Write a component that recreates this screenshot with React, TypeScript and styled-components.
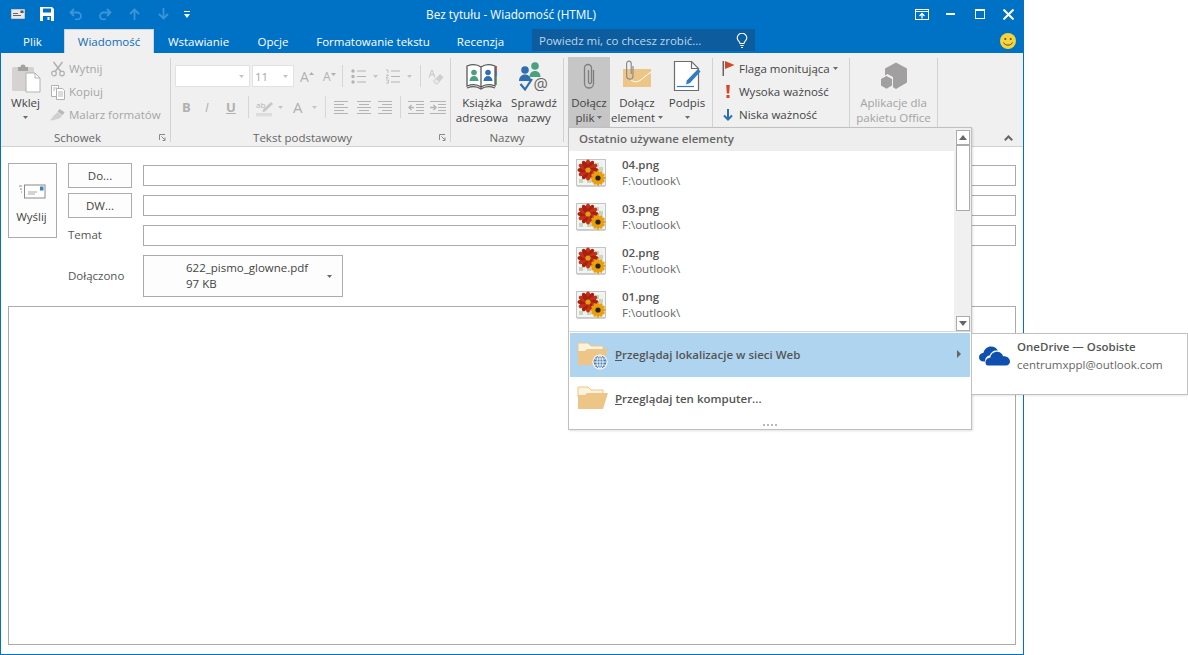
import { FC, ReactNode } from "react";
import styled, { createGlobalStyle } from "styled-components";

const GlobalStyle = createGlobalStyle`
  html, body {
    margin: 0;
    padding: 0;
    background: #fff;
  }
  body {
    font-family: "Open Sans", "Noto Sans", "Liberation Sans", sans-serif;
    font-size: 11.5px;
    color: #444;
  }
`;

const Caret: FC<{ color?: string; up?: boolean }> = ({ color = "#6a6a6a", up }) => (
  <svg width="5" height="3" viewBox="0 0 5 3">
    <path d={up ? "M0 3h5L2.500 0z" : "M0 0h5L2.500 3z"} fill={color} />
  </svg>
);

const PETALS = [0, 30, 60, 90, 120, 150, 180, 210, 240, 270, 300, 330];

const FlowerThumb = () => (
  <svg width="30" height="28" viewBox="0 0 30 28">
    <rect x="0.5" y="0.5" width="29" height="26" fill="#f4f4f4" stroke="#c4c4c4" />
    <path d="M1 26.500h28V28H1z" fill="#d0d0d0" />
    <rect x="3" y="3" width="24" height="21" fill="#eef2ea" />
    <path d="M19 4h4v4h-4zM23 8h4v4h-4zM19 12h4v4h-4zM3 20h4v4H3zM11 20h4v4h-4z" fill="#c8d6c0" />
    {PETALS.map((deg) => (
      <ellipse key={deg} cx="12" cy="5.500" rx="2.300" ry="5" fill={deg % 60 ? "#a8200e" : "#c4301a"} transform={`rotate(${deg} 12 11)`} />
    ))}
    <circle cx="12" cy="11" r="2.600" fill="#d9a21a" />
    {PETALS.map((deg) => (
      <ellipse key={deg} cx="22" cy="14.500" rx="1.700" ry="3.200" fill="#e8a010" transform={`rotate(${deg} 22 19)`} />
    ))}
    <circle cx="22" cy="19" r="2.600" fill="#2c2418" />
  </svg>
);

const FolderIcon: FC<{ globe?: boolean }> = ({ globe }) => (
  <svg width="32" height="32" viewBox="0 0 32 32">
    <path d="M1 5h10l3 3h12v7H1z" fill="#fdf2dc" stroke="#edc687" />
    <path d="M1 27V13h7l2-2h21l-5 16z" fill="#edc687" />
    {globe && (
      <g>
        <circle cx="23" cy="24" r="7.600" fill="#fff" />
        <circle cx="23" cy="24" r="6.500" fill="#4f7fb8" />
        <path d="M16.500 24h13M17.500 21h11M17.500 27h11M23 17.500v13" stroke="#fff" strokeWidth="0.9" />
        <ellipse cx="23" cy="24" rx="3" ry="6.500" fill="none" stroke="#fff" strokeWidth="0.9" />
      </g>
    )}
  </svg>
);

const PasteIcon = () => (
  <svg width="30" height="31" viewBox="0 0 30 31">
    <rect x="1" y="5" width="22" height="24" rx="1.500" fill="#d6d2d2" />
    <path d="M7 5h2.500a2.500 2.500 0 0 1 5 0H17v4H7z" fill="#a3a0a0" />
    <path d="M15 11h9l5 5v14H15z" fill="#fff" stroke="#b4b2b2" />
    <path d="M24 11v5h5" fill="none" stroke="#b4b2b2" />
  </svg>
);

const ScissorsIcon = () => (
  <svg width="16" height="16" viewBox="0 0 16 16" fill="none" stroke="#b0b0b0" strokeWidth="1.200">
    <circle cx="4" cy="12.500" r="2.300" />
    <circle cx="12" cy="12.500" r="2.300" />
    <path d="M5.200 10.500 12.500 1M10.800 10.500 3.500 1" strokeWidth="1.500" />
  </svg>
);

const CopyIcon = () => (
  <svg width="16" height="16" viewBox="0 0 16 16" fill="#fff" stroke="#b0b0b0">
    <path d="M1.500 1.500h7v11h-7z" />
    <path d="M6.500 4.500h6l2 2v9h-8z" />
    <path d="M3 4h4M3 6h2M8 8h5M8 10h5M8 12h5" strokeWidth="0.9" />
  </svg>
);

const PainterIcon = () => (
  <svg width="17" height="16" viewBox="0 0 17 16">
    <path d="M10 1.500 15.500 5l-2 3L8 4.500z" fill="#b8b8b8" />
    <path d="M8 5l5 3.200-2.400 3.300L1 14l-.5-1.500 3.500-2-2.500.3z" fill="#cfcfcf" />
  </svg>
);

const Launcher = () => (
  <svg width="7" height="7" viewBox="0 0 7 7" fill="none" stroke="#8a8a8a">
    <path d="M.5 6V.5H6" />
    <path d="M2.500 2.500 6 6M6 3.500V6.500H3.500" />
  </svg>
);

const ListIcon: FC<{ numbered?: boolean }> = ({ numbered }) => (
  <svg width="15" height="15" viewBox="0 0 15 15" fill="none" stroke="#b4b4b4">
    {numbered ? (
      <path d="M1 1h2v3M1 6h2.500L1 9h2.500M1 11h2.500v3H1" strokeWidth="0.8" />
    ) : (
      <g fill="#b4b4b4" stroke="none">
        <circle cx="2" cy="2" r="1.700" />
        <circle cx="2" cy="7.500" r="1.700" />
        <circle cx="2" cy="13" r="1.700" />
      </g>
    )}
    <path d="M6 2h9M6 7.500h9M6 13h9" />
  </svg>
);

const ClearIcon = () => (
  <svg width="16" height="17" viewBox="0 0 16 17">
    <path d="M4 1 7.500 9.500h-1L5.600 7.200H2.400L1.500 9.500h-1zM4 3 2.800 6.200h2.400z" fill="#c2c2c2" />
    <path d="M5.500 13 12 6l3.500 3.200L9.500 16H7.500z" fill="#cfcfcf" />
    <path d="M5.500 13 8 10.400l3.500 3.200L9.500 16H7.500z" fill="#e8e8e8" stroke="#c2c2c2" strokeWidth="0.6" />
  </svg>
);

const HighlightIcon = () => (
  <svg width="17" height="20" viewBox="0 -4 17 20">
    <text x="0" y="7" fontFamily="Open Sans, sans-serif" fontSize="8" fill="#b4b4b4">ab</text>
    <path d="M15 1 17 3 9 10.500 6.500 11l.5-2.600z" fill="#c8c8c8" />
    <rect x="0" y="12" width="16" height="3.500" fill="#dddddd" />
  </svg>
);

const AlignIcon: FC<{ mode: "left" | "center" | "right" }> = ({ mode }) => {
  const short = { left: "M0 3.500h10M0 9.500h10", center: "M2 3.500h10M2 9.500h10", right: "M4 3.500h10M4 9.500h10" }[mode];
  return (
    <svg width="14" height="13" viewBox="0 0 14 13" fill="none" stroke="#b4b4b4">
      <path d="M0 .5h14M0 6.500h14M0 12.500h14" />
      <path d={short} />
    </svg>
  );
};

const IndentIcon: FC<{ increase?: boolean }> = ({ increase }) => (
  <svg width="16" height="13" viewBox="0 0 16 13" fill="none" stroke="#b4b4b4">
    <path d="M0 .5h16M8 3.500h8M8 6.500h8M8 9.500h8M0 12.500h16" />
    {increase ? (
      <path d="M0 6.500h5M3.500 4 6 6.500 3.500 9" strokeWidth="1.400" />
    ) : (
      <path d="M6 6.500H1M3.500 4 1 6.500 3.500 9" strokeWidth="1.400" />
    )}
  </svg>
);

const AddressBookIcon = () => (
  <svg width="32" height="28" viewBox="0 0 32 28">
    <path d="M28 3h3v19h-3z" fill="#6fa66f" />
    <path d="M28 3h3v5h-3z" fill="#d2603a" />
    <path d="M28 8h3v5h-3z" fill="#3f7fc0" />
    <path d="M1 3c5-2 10-2 14 1v20C11 21 6 21 1 23zM15 4c4-3 9-3 14-1v20c-5-2-10-2-14 1z" fill="#fff" stroke="#5a5a5a" strokeWidth="1.300" />
    <circle cx="8" cy="9.500" r="2.800" fill="#4aa07f" />
    <path d="M3.500 18c0-3 2-5 4.500-5s4.500 2 4.500 5z" fill="#4aa07f" />
    <circle cx="22" cy="9.500" r="2.800" fill="#2f6fb0" />
    <path d="M17.500 18c0-3 2-5 4.500-5s4.500 2 4.500 5z" fill="#2f6fb0" />
    <path d="M1 25c5-2 10-2 14 1 4-3 9-3 14-1" fill="none" stroke="#5a5a5a" strokeWidth="1.300" />
  </svg>
);

const CheckNamesIcon = () => (
  <svg width="32" height="36" viewBox="0 0 32 36">
    <circle cx="17" cy="4" r="3.800" fill="#4aa07f" />
    <path d="M11.500 15c0-4 2.500-6 5.500-6s5.500 2 5.500 6z" fill="#4aa07f" />
    <circle cx="7" cy="8" r="3.800" fill="#2f6fb0" />
    <path d="M1 19c0-4 2.500-6.500 6-6.500s6 2.500 6 6.500z" fill="#2f6fb0" />
    <path d="M2.500 22 7 27.500 14 17" fill="none" stroke="#2f6fb0" strokeWidth="2.200" />
    <text x="15.500" y="28" fontFamily="Open Sans, sans-serif" fontSize="16" fill="#666">@</text>
  </svg>
);

const PaperclipIcon = () => (
  <svg width="14" height="28" viewBox="0 0 14 28" fill="none" stroke="#7e7e7e" strokeWidth="1.300">
    <path d="M11.500 8v13.500a4.500 4.500 0 0 1-9 0V6a3.500 3.500 0 0 1 7 0v14a1.500 1.500 0 0 1-3 0V8" />
  </svg>
);

const AttachItemIcon = () => (
  <svg width="30" height="27" viewBox="0 0 30 27">
    <path d="M1 9h28v18H1z" fill="#edc687" />
    <path d="M9 20c4 3 8 2 12-2l8-6" fill="none" stroke="#fff" strokeWidth="1" />
    <path d="M11 6v10a3.200 3.200 0 0 1-6.400 0V3.500a2.300 2.300 0 0 1 4.600 0V14" fill="none" stroke="#8c8c8c" strokeWidth="1.200" />
  </svg>
);

const SignatureIcon = () => (
  <svg width="28" height="32" viewBox="0 0 28 32">
    <path d="M1.500 1.500h17l7 7v22h-24z" fill="#fff" stroke="#6d6d6d" strokeWidth="1.200" />
    <path d="M18.500 1.500v7h7" fill="none" stroke="#6d6d6d" strokeWidth="1.200" />
    <path d="M25 9l2.500 2.500-10.500 11.500-4 1.500 1-4.200z" fill="#2f7cc4" />
    <path d="M4 26.500h17" stroke="#2f7cc4" strokeWidth="1.200" />
  </svg>
);

const FlagIcon = () => (
  <svg width="13" height="15" viewBox="0 0 13 15">
    <path d="M.5 0h1.500v15H.5z" fill="#666" />
    <path d="M3 0l9.500 4L3 8z" fill="#d24726" />
  </svg>
);

const HighImportanceIcon = () => (
  <svg width="6" height="13" viewBox="0 0 6 13">
    <path d="M1.200 0h3.600l-.6 8.500H1.800z" fill="#d24726" />
    <rect x="1.500" y="10" width="3" height="3" fill="#d24726" />
  </svg>
);

const LowImportanceIcon = () => (
  <svg width="10" height="12" viewBox="0 0 10 12" fill="none" stroke="#2f6fb0" strokeWidth="2">
    <path d="M5 0v10M1 6.500 5 10.500 9 6.500" />
  </svg>
);

const AppsIcon = () => (
  <svg width="28" height="28" viewBox="0 0 28 28">
    <path d="M16 .5 27 6.500v14l-11 6.500-3-1.800V15L7.500 12 5 13.500V6.500z" fill="#a29fa0" />
    <path d="M6.500 14 12 17v6.500l-5.500 3.200L1 23.500V17z" fill="#a29fa0" />
  </svg>
);

const SendIcon = () => (
  <svg width="28" height="15" viewBox="0 0 28 15" fill="none">
    <rect x="6.500" y="1" width="20.500" height="13" fill="#fff" stroke="#8a8a8a" />
    <rect x="22" y="2.500" width="3.500" height="4" fill="#3f7fc0" />
    <path d="M10 8h9M10 10h7" stroke="#a8a8a8" />
    <path d="M1 2h3M2 5h2M3 8h1" stroke="#8a8a8a" />
  </svg>
);

const OneDriveIcon = () => (
  <svg width="33" height="22" viewBox="0 0 33 22">
    <path d="M7 17.500c-4 .5-6-1.500-6-4.200 0-2.600 2-4.200 4.300-4.200C6.300 5 9.500 2.500 13 2.500c3 0 5.500 1.500 6.800 4-3.800-.6-7.200 1.500-8 5-2.800 0-4.600 2.500-4.800 6z" fill="#0f4fb0" />
    <path d="M10 21.500c-1.500 0-2.500-1.300-2.500-3 0-2.600 1.800-4.800 4.800-4.800.4-3.800 3.400-6 6.700-6 3 0 5.300 1.800 6.200 4.500 3.800-.2 6.800 2 6.800 5.300 0 2.300-1.500 4-4 4z" fill="#0f4fb0" />
  </svg>
);

const Smiley = () => (
  <svg width="16" height="16" viewBox="0 0 16 16">
    <circle cx="8" cy="8" r="8" fill="#f6d33c" />
    <circle cx="5.300" cy="6" r="1" fill="#5a4a10" />
    <circle cx="10.700" cy="6" r="1" fill="#5a4a10" />
    <path d="M3.500 9.500c1.500 3.500 7.500 3.500 9 0" fill="none" stroke="#5a4a10" strokeWidth="1" />
  </svg>
);

const BulbIcon = () => (
  <svg width="12" height="15" viewBox="0 0 12 15" fill="none" stroke="#fff" strokeWidth="1.100">
    <path d="M4 10.500C4 8.500 1.200 7.800 1.200 5a4.800 4.800 0 0 1 9.600 0c0 2.800-2.800 3.500-2.800 5.500z" />
    <path d="M4.300 12.500h3.400M5 14.500h2" />
  </svg>
);

const MailGlyph = () => (
  <svg width="14" height="10" viewBox="0 0 14 10">
    <rect width="14" height="10" fill="#e9e9e9" stroke="#777" strokeWidth="0.6" />
    <rect x="9.500" y="1.500" width="3" height="2.500" fill="#555" />
    <path d="M2 4.500h5M2 6.500h8" stroke="#666" />
  </svg>
);

const SaveGlyph = () => (
  <svg width="14" height="14" viewBox="0 0 14 14">
    <path d="M0 0h12l2 2v12H0z" fill="#fff" />
    <path d="M3 1.500h8v4H3zM3 9h8v5H3z" fill="#0072c6" />
    <rect x="7.500" y="10" width="2" height="3" fill="#fff" />
  </svg>
);

const UndoGlyph: FC<{ flip?: boolean }> = ({ flip }) => (
  <svg width="14" height="12" viewBox="0 0 14 12" fill="none" stroke="#3d94d8" strokeWidth="1.800"
    style={flip ? { transform: "scaleX(-1)" } : undefined}>
    <path d="M5 1 1.500 4.500 5 8M2 4.500h6.500a3.500 3.500 0 0 1 0 7H6" />
  </svg>
);

const VerticalArrow: FC<{ down?: boolean }> = ({ down }) => (
  <svg width="11" height="12" viewBox="0 0 11 12" fill="none" stroke="#3d94d8" strokeWidth="1.800"
    style={down ? { transform: "scaleY(-1)" } : undefined}>
    <path d="M5.500 12V1.500M1 6l4.500-4.500L10 6" />
  </svg>
);

const CustomizeGlyph = () => (
  <svg width="6" height="7" viewBox="0 0 6 7" fill="#fff">
    <path d="M0 0h6v1H0zM0 3h6L3 7z" />
  </svg>
);

const RestoreRibbonGlyph = () => (
  <svg width="14" height="11" viewBox="0 0 14 11" fill="none" stroke="#fff">
    <rect x=".5" y=".5" width="13" height="10" />
    <path d="M.5 2.500h13" />
    <path d="M7 9.500V4.500M4.500 7 7 4.500 9.500 7" strokeWidth="1.300" />
  </svg>
);

const Window = styled.div`
  width: 1024px;
  height: 655px;
  box-sizing: border-box;
  border: 1px solid #0072c6;
  border-top: 0;
  background: #fff;
  display: flex;
  flex-direction: column;
`;

const TitleBar = styled.div`
  height: 28px;
  background: #0072c6;
  display: grid;
  grid-template-columns: 1fr auto 1fr;
  align-items: center;
  color: #fff;
`;

const Qat = styled.div`
  display: flex;
  align-items: center;
  padding-left: 10px;
`;

const QatSlot = styled.span<{ $w: number }>`
  width: ${(p) => p.$w}px;
  display: flex;
  align-items: center;
`;

const WindowTitle = styled.div`
  font-size: 11.75px;
  padding-right: 2px;
  white-space: nowrap;
`;

const WindowControls = styled.div`
  display: flex;
  align-items: center;
  justify-content: flex-end;
`;

const ControlSlot = styled.span<{ $w: number }>`
  width: ${(p) => p.$w}px;
  display: flex;
  justify-content: center;
  align-items: center;
`;

const MinimizeGlyph = styled.span`
  width: 9px;
  height: 2px;
  background: #fff;
`;

const MaximizeGlyph = styled.span`
  width: 8px;
  height: 7px;
  border: 1px solid #fff;
  border-top-width: 2px;
`;

const TabBar = styled.div`
  height: 25px;
  background: #0072c6;
  display: flex;
  align-items: flex-end;
  position: relative;
`;

const Tab = styled.div<{ $w: number; $active?: boolean }>`
  width: ${(p) => p.$w}px;
  height: 24px;
  box-sizing: border-box;
  display: flex;
  align-items: center;
  justify-content: center;
  white-space: nowrap;
  color: ${(p) => (p.$active ? "#0f6cb8" : "#fff")};
  background: ${(p) => (p.$active ? "#f0f0f0" : "transparent")};
  border: ${(p) => (p.$active ? "1px solid #d2d2d2" : "0")};
  border-bottom: 0;
`;

const SearchBox = styled.div`
  margin: 0 0 2px 14px;
  width: 223px;
  height: 22px;
  background: #0d5c9e;
  color: #bcd6ec;
  display: flex;
  align-items: center;
  justify-content: space-between;
  box-sizing: border-box;
  padding: 0 7px;
`;

const SmileySlot = styled.div`
  margin-left: auto;
  margin-right: 7px;
  align-self: center;
  display: flex;
`;

const Ribbon = styled.div`
  height: 94px;
  box-sizing: border-box;
  background: #f0f0f0;
  border-bottom: 1px solid #d2d2d2;
  display: flex;
  align-items: stretch;
`;

const Group = styled.div<{ $w: number }>`
  width: ${(p) => p.$w}px;
  position: relative;
  display: flex;
  flex-direction: column;
  padding-top: 4px;
  box-sizing: border-box;
`;

const GroupBody = styled.div<{ $pl?: number; $column?: boolean }>`
  height: 70px;
  display: flex;
  flex-direction: ${(p) => (p.$column ? "column" : "row")};
  padding-left: ${(p) => p.$pl ?? 0}px;
`;

const GroupLabel = styled.div<{ $launcher?: boolean }>`
  text-align: center;
  height: 16px;
  line-height: 15px;
  margin-top: 3px;
  padding-right: ${(p) => (p.$launcher ? 16 : 0)}px;
  color: #666;
  white-space: nowrap;
`;

const LauncherSlot = styled.span`
  position: absolute;
  right: 4px;
  bottom: 5px;
  display: flex;
`;

const GroupSep = styled.div`
  width: 1px;
  margin: 5px 0 4px;
  background: #d2d2d2;
`;

const BigButton = styled.div<{ $w: number; $active?: boolean; $disabled?: boolean }>`
  width: ${(p) => p.$w}px;
  flex: none;
  display: flex;
  flex-direction: column;
  align-items: center;
  background: ${(p) => (p.$active ? "#c6c6c6" : "transparent")};
  color: ${(p) => (p.$disabled ? "#a3a3a3" : "#444")};
  white-space: nowrap;
`;

const BigIcon = styled.div<{ $pt: number }>`
  height: 38px;
  box-sizing: border-box;
  padding-top: ${(p) => p.$pt}px;
  display: flex;
  justify-content: center;
`;

const BigLine = styled.div`
  height: 15px;
  line-height: 15px;
  display: flex;
  align-items: center;
  gap: 3px;
`;

const SmallColumn = styled.div<{ $pl?: number }>`
  display: flex;
  flex-direction: column;
  padding-left: ${(p) => p.$pl ?? 0}px;
`;

const SmallButton = styled.div<{ $disabled?: boolean }>`
  height: 23px;
  display: flex;
  align-items: center;
  gap: 3px;
  white-space: nowrap;
  color: ${(p) => (p.$disabled ? "#a6a6a6" : "#444")};
`;

const SmallIcon = styled.span`
  width: 16px;
  display: flex;
  justify-content: center;
`;

const ToolRow = styled.div<{ $mt: number }>`
  display: flex;
  align-items: center;
  height: 22px;
  margin-top: ${(p) => p.$mt}px;
`;

const Combo = styled.div<{ $w: number; $ml?: number }>`
  width: ${(p) => p.$w}px;
  height: 22px;
  margin-left: ${(p) => p.$ml ?? 0}px;
  box-sizing: border-box;
  background: #fff;
  border: 1px solid #e2e2e2;
  color: #a6a6a6;
  display: flex;
  align-items: center;
  justify-content: space-between;
  padding: 0 5px 0 2px;
`;

const Tool = styled.span<{ $w: number; $ml?: number; $font?: string }>`
  width: ${(p) => p.$w}px;
  margin-left: ${(p) => p.$ml ?? 0}px;
  flex: none;
  display: flex;
  align-items: center;
  justify-content: space-between;
  color: #b0b0b0;
  ${(p) => (p.$font ? `font: ${p.$font};` : "")}
`;

const SuperCaret = styled.span`
  display: flex;
  align-self: flex-start;
  margin-top: 5px;
`;

const ToolSep = styled.span<{ $ml: number }>`
  width: 1px;
  height: 22px;
  margin-left: ${(p) => p.$ml}px;
  background: #d6d6d6;
  flex: none;
`;

const Collapse = styled.div`
  flex: 1;
  display: flex;
  justify-content: flex-end;
  align-items: flex-end;
  padding: 0 10px 5px 0;
`;

const Content = styled.div`
  flex: 1;
  display: flex;
  flex-direction: column;
  padding: 16px 7px 9px;
  min-height: 0;
`;

const Header = styled.div`
  display: flex;
  align-items: flex-start;
  gap: 11px;
`;

const SendButton = styled.div`
  width: 49px;
  height: 75px;
  flex: none;
  box-sizing: border-box;
  border: 1px solid #ababab;
  background: #fdfdfd;
  display: flex;
  flex-direction: column;
  align-items: center;
  padding: 20px 2px 0 0;
  gap: 10px;
  color: #444;
`;

const AddressGrid = styled.div`
  flex: 1;
  display: grid;
  grid-template-columns: 64px 1fr;
  grid-template-rows: 25px 25px 25px 44px;
  column-gap: 11px;
  row-gap: 5px;
  align-items: center;
`;

const AddressButton = styled.div`
  height: 25px;
  box-sizing: border-box;
  border: 1px solid #ababab;
  background: #fdfdfd;
  display: flex;
  align-items: center;
  justify-content: center;
  color: #444;
`;

const Field = styled.div`
  height: 21px;
  box-sizing: border-box;
  border: 1px solid #ababab;
  background: #fff;
`;

const FieldLabel = styled.div`
  color: #555;
`;

const SubjectLabel = styled(FieldLabel)`
  margin-top: -3px;
`;

const AttachmentBox = styled.div`
  align-self: end;
  width: 200px;
  height: 42px;
  box-sizing: border-box;
  border: 1px solid #ababab;
  background: #fdfdfd;
  display: flex;
  align-items: center;
  justify-content: space-between;
  padding: 0 10px 0 42px;
  line-height: 16px;
  color: #444;
`;

const MessageBody = styled.div`
  flex: 1;
  margin-top: 9px;
  border: 1px solid #ababab;
  background: #fff;
`;

const Dropdown = styled.div`
  position: absolute;
  left: 568px;
  top: 127px;
  width: 404px;
  height: 303px;
  box-sizing: border-box;
  background: #fff;
  border: 1px solid #c0c0c0;
  box-shadow: 1px 1px 2px rgba(0, 0, 0, 0.12);
  display: flex;
  flex-direction: column;
`;

const RecentArea = styled.div`
  height: 203px;
  display: flex;
  flex: none;
`;

const RecentList = styled.div`
  flex: 1;
`;

const RecentHeader = styled.div`
  height: 23px;
  box-sizing: border-box;
  padding: 0 0 2px 10px;
  background: #eeeeee;
  display: flex;
  align-items: center;
  font-weight: 600;
  color: #666;
`;

const RecentItem = styled.div`
  height: 44px;
  display: flex;
  align-items: center;
  padding-left: 7px;
  gap: 16px;
`;

const ItemText = styled.div`
  line-height: 16px;
`;

const ItemName = styled.div`
  font-weight: 600;
  color: #555;
`;

const ItemPath = styled.div`
  color: #666;
`;

const ScrollBar = styled.div`
  width: 17px;
  background: #f0f0f0;
  display: flex;
  flex-direction: column;
  align-items: center;
  padding-top: 2px;
  box-sizing: border-box;
`;

const ScrollButton = styled.div`
  width: 14px;
  height: 15px;
  box-sizing: border-box;
  background: #fff;
  border: 1px solid #ababab;
  display: flex;
  align-items: center;
  justify-content: center;
`;

const ScrollThumb = styled.div`
  width: 14px;
  height: 66px;
  box-sizing: border-box;
  background: #fff;
  border: 1px solid #ababab;
`;

const ScrollSpacer = styled.div`
  flex: 1;
`;

const ScrollTriangle = styled.svg<{ $down?: boolean }>`
  transform: ${(p) => (p.$down ? "rotate(180deg)" : "none")};
`;

const MenuDivider = styled.div`
  height: 1px;
  margin-bottom: 1px;
  background: #d8d8d8;
`;

const MenuItem = styled.div<{ $active?: boolean }>`
  height: 44px;
  flex: none;
  box-sizing: border-box;
  margin: 0 1px;
  background: ${(p) => (p.$active ? "#afd4ef" : "transparent")};
  display: flex;
  align-items: center;
  padding: 0 9px 2px 7px;
  gap: 6px;
  font-weight: 600;
  color: #555;
`;

const MenuArrow = styled.span`
  margin-left: auto;
  width: 0;
  height: 0;
  border-left: 4px solid #666;
  border-top: 4px solid transparent;
  border-bottom: 4px solid transparent;
`;

const Grip = styled.div`
  flex: 1;
  display: flex;
  align-items: center;
  justify-content: center;
  gap: 2px;
`;

const GripDot = styled.span`
  width: 2px;
  height: 2px;
  background: #b8b8b8;
`;

const Flyout = styled.div`
  position: absolute;
  left: 971px;
  top: 333px;
  width: 217px;
  height: 62px;
  box-sizing: border-box;
  background: #fff;
  border: 1px solid #c0c0c0;
  box-shadow: 1px 1px 2px rgba(0, 0, 0, 0.1);
  display: flex;
  padding: 4px 0 0 6px;
  gap: 6px;
`;

const FlyoutIcon = styled.div`
  padding-top: 6px;
`;

const FlyoutText = styled.div`
  line-height: 18px;
  color: #666;
`;

const FlyoutTitle = styled.div`
  font-weight: 600;
  color: #555;
`;

const Row: FC<{ label: string; icon: ReactNode; disabled?: boolean; caret?: boolean }> = ({ label, icon, disabled, caret }) => (
  <SmallButton $disabled={disabled}>
    <SmallIcon>{icon}</SmallIcon>
    {label}
    {caret && <Caret />}
  </SmallButton>
);

const RECENT = ["04.png", "03.png", "02.png", "01.png"];

const App = () => (
  <>
    <GlobalStyle />
    <Window>
      <TitleBar>
        <Qat>
          <QatSlot $w={29}><MailGlyph /></QatSlot>
          <QatSlot $w={29}><SaveGlyph /></QatSlot>
          <QatSlot $w={29}><UndoGlyph /></QatSlot>
          <QatSlot $w={31}><UndoGlyph flip /></QatSlot>
          <QatSlot $w={29}><VerticalArrow /></QatSlot>
          <QatSlot $w={26}><VerticalArrow down /></QatSlot>
          <QatSlot $w={6}><CustomizeGlyph /></QatSlot>
        </Qat>
        <WindowTitle>Bez tytułu - Wiadomość (HTML)</WindowTitle>
        <WindowControls>
          <ControlSlot $w={29}><RestoreRibbonGlyph /></ControlSlot>
          <ControlSlot $w={29}><MinimizeGlyph /></ControlSlot>
          <ControlSlot $w={29}><MaximizeGlyph /></ControlSlot>
          <ControlSlot $w={29}>
            <svg width="11" height="11" viewBox="0 0 11 11" stroke="#fff" strokeWidth="2">
              <path d="M.5.5l10 10M10.500.5l-10 10" />
            </svg>
          </ControlSlot>
        </WindowControls>
      </TitleBar>

      <TabBar>
        <Tab $w={63}>Plik</Tab>
        <Tab $w={90} $active>Wiadomość</Tab>
        <Tab $w={89}>Wstawianie</Tab>
        <Tab $w={60}>Opcje</Tab>
        <Tab $w={140}>Formatowanie tekstu</Tab>
        <Tab $w={75}>Recenzja</Tab>
        <SearchBox>
          Powiedz mi, co chcesz zrobić...
          <BulbIcon />
        </SearchBox>
        <SmileySlot><Smiley /></SmileySlot>
      </TabBar>

      <Ribbon>
        <Group $w={169}>
          <GroupBody>
            <BigButton $w={49}>
              <BigIcon $pt={5}><PasteIcon /></BigIcon>
              <BigLine>Wklej</BigLine>
              <BigLine><Caret /></BigLine>
            </BigButton>
            <SmallColumn>
              <Row disabled label="Wytnij" icon={<ScissorsIcon />} />
              <Row disabled label="Kopiuj" icon={<CopyIcon />} />
              <Row disabled label="Malarz formatów" icon={<PainterIcon />} />
            </SmallColumn>
          </GroupBody>
          <GroupLabel $launcher>Schowek</GroupLabel>
          <LauncherSlot><Launcher /></LauncherSlot>
        </Group>
        <GroupSep />

        <Group $w={279}>
          <GroupBody $column $pl={4}>
            <ToolRow $mt={8}>
              <Combo $w={75}><span />
                <Caret color="#c4c4c4" />
              </Combo>
              <Combo $w={42} $ml={2}>11<Caret color="#c4c4c4" /></Combo>
              <Tool $w={14} $ml={6} $font='14px "Open Sans", sans-serif'>A<SuperCaret><Caret up color="#b0b0b0" /></SuperCaret></Tool>
              <Tool $w={13} $ml={9} $font='12px "Open Sans", sans-serif'>A<SuperCaret><Caret color="#b0b0b0" /></SuperCaret></Tool>
              <ToolSep $ml={6} />
              <Tool $w={27} $ml={8}><ListIcon /><Caret color="#c4c4c4" /></Tool>
              <Tool $w={27} $ml={7}><ListIcon numbered /><Caret color="#c4c4c4" /></Tool>
              <ToolSep $ml={8} />
              <Tool $w={16} $ml={7}><ClearIcon /></Tool>
            </ToolRow>
            <ToolRow $mt={9}>
              <Tool $w={9} $ml={7} $font='700 13px "Open Sans", sans-serif'>B</Tool>
              <Tool $w={9} $ml={14} $font='italic 13px "Open Sans", sans-serif'>I</Tool>
              <Tool $w={10} $ml={12} $font='700 13px "Open Sans", sans-serif'><u>U</u></Tool>
              <ToolSep $ml={12} />
              <Tool $w={27} $ml={7}><HighlightIcon /><Caret color="#c4c4c4" /></Tool>
              <Tool $w={24} $ml={10} $font='15px "Open Sans", sans-serif'>A<Caret color="#c4c4c4" /></Tool>
              <ToolSep $ml={8} />
              <Tool $w={14} $ml={8}><AlignIcon mode="left" /></Tool>
              <Tool $w={14} $ml={9}><AlignIcon mode="center" /></Tool>
              <Tool $w={14} $ml={7}><AlignIcon mode="right" /></Tool>
              <ToolSep $ml={8} />
              <Tool $w={16} $ml={7}><IndentIcon /></Tool>
              <Tool $w={16} $ml={6}><IndentIcon increase /></Tool>
            </ToolRow>
          </GroupBody>
          <GroupLabel $launcher>Tekst podstawowy</GroupLabel>
          <LauncherSlot><Launcher /></LauncherSlot>
        </Group>
        <GroupSep />

        <Group $w={112}>
          <GroupBody $pl={5}>
            <BigButton $w={52}>
              <BigIcon $pt={6}><AddressBookIcon /></BigIcon>
              <BigLine>Książka</BigLine>
              <BigLine>adresowa</BigLine>
            </BigButton>
            <BigButton $w={52}>
              <BigIcon $pt={5}><CheckNamesIcon /></BigIcon>
              <BigLine>Sprawdź</BigLine>
              <BigLine>nazwy</BigLine>
            </BigButton>
          </GroupBody>
          <GroupLabel>Nazwy</GroupLabel>
        </Group>
        <GroupSep />

        <Group $w={148}>
          <GroupBody $pl={4}>
            <BigButton $w={42} $active>
              <BigIcon $pt={5}><PaperclipIcon /></BigIcon>
              <BigLine>Dołącz</BigLine>
              <BigLine>plik <Caret /></BigLine>
            </BigButton>
            <BigButton $w={54}>
              <BigIcon $pt={3}><AttachItemIcon /></BigIcon>
              <BigLine>Dołącz</BigLine>
              <BigLine>element <Caret /></BigLine>
            </BigButton>
            <BigButton $w={46}>
              <BigIcon $pt={3}><SignatureIcon /></BigIcon>
              <BigLine>Podpis</BigLine>
              <BigLine><Caret /></BigLine>
            </BigButton>
          </GroupBody>
        </Group>
        <GroupSep />

        <Group $w={136}>
          <GroupBody>
            <SmallColumn $pl={7}>
              <Row label="Flaga monitująca" icon={<FlagIcon />} caret />
              <Row label="Wysoka ważność" icon={<HighImportanceIcon />} />
              <Row label="Niska ważność" icon={<LowImportanceIcon />} />
            </SmallColumn>
          </GroupBody>
        </Group>
        <GroupSep />

        <Group $w={87}>
          <GroupBody>
            <BigButton $w={87} $disabled>
              <BigIcon $pt={5}><AppsIcon /></BigIcon>
              <BigLine>Aplikacje dla</BigLine>
              <BigLine>pakietu Office</BigLine>
            </BigButton>
          </GroupBody>
        </Group>
        <GroupSep />

        <Collapse>
          <svg width="9" height="6" viewBox="0 0 9 6" fill="none" stroke="#666" strokeWidth="2">
            <path d="M.8 5.200 4.500 1.500 8.200 5.200" />
          </svg>
        </Collapse>
      </Ribbon>

      <Content>
        <Header>
          <SendButton>
            <SendIcon />
            Wyślij
          </SendButton>
          <AddressGrid>
            <AddressButton>Do...</AddressButton>
            <Field />
            <AddressButton>DW...</AddressButton>
            <Field />
            <SubjectLabel>Temat</SubjectLabel>
            <Field />
            <FieldLabel>Dołączono</FieldLabel>
            <AttachmentBox>
              <div>
                622_pismo_glowne.pdf
                <br />
                97 KB
              </div>
              <Caret />
            </AttachmentBox>
          </AddressGrid>
        </Header>
        <MessageBody />
      </Content>
    </Window>

    <Dropdown>
      <RecentArea>
        <RecentList>
          <RecentHeader>Ostatnio używane elementy</RecentHeader>
          {RECENT.map((name) => (
            <RecentItem key={name}>
              <FlowerThumb />
              <ItemText>
                <ItemName>{name}</ItemName>
                <ItemPath>F:\outlook\</ItemPath>
              </ItemText>
            </RecentItem>
          ))}
        </RecentList>
        <ScrollBar>
          <ScrollButton>
            <ScrollTriangle width="8" height="5" viewBox="0 0 8 5"><path d="M0 5h8L4 0z" fill="#666" /></ScrollTriangle>
          </ScrollButton>
          <ScrollThumb />
          <ScrollSpacer />
          <ScrollButton>
            <ScrollTriangle $down width="8" height="5" viewBox="0 0 8 5"><path d="M0 5h8L4 0z" fill="#666" /></ScrollTriangle>
          </ScrollButton>
        </ScrollBar>
      </RecentArea>
      <MenuDivider />
      <MenuItem $active>
        <FolderIcon globe />
        <span><u>P</u>rzeglądaj lokalizacje w sieci Web</span>
        <MenuArrow />
      </MenuItem>
      <MenuItem>
        <FolderIcon />
        <span><u>P</u>rzeglądaj ten komputer...</span>
      </MenuItem>
      <Grip>
        <GripDot />
        <GripDot />
        <GripDot />
        <GripDot />
      </Grip>
    </Dropdown>

    <Flyout>
      <FlyoutIcon><OneDriveIcon /></FlyoutIcon>
      <FlyoutText>
        <FlyoutTitle>OneDrive — Osobiste</FlyoutTitle>
        centrumxppl@outlook.com
      </FlyoutText>
    </Flyout>
  </>
);

export default App;
